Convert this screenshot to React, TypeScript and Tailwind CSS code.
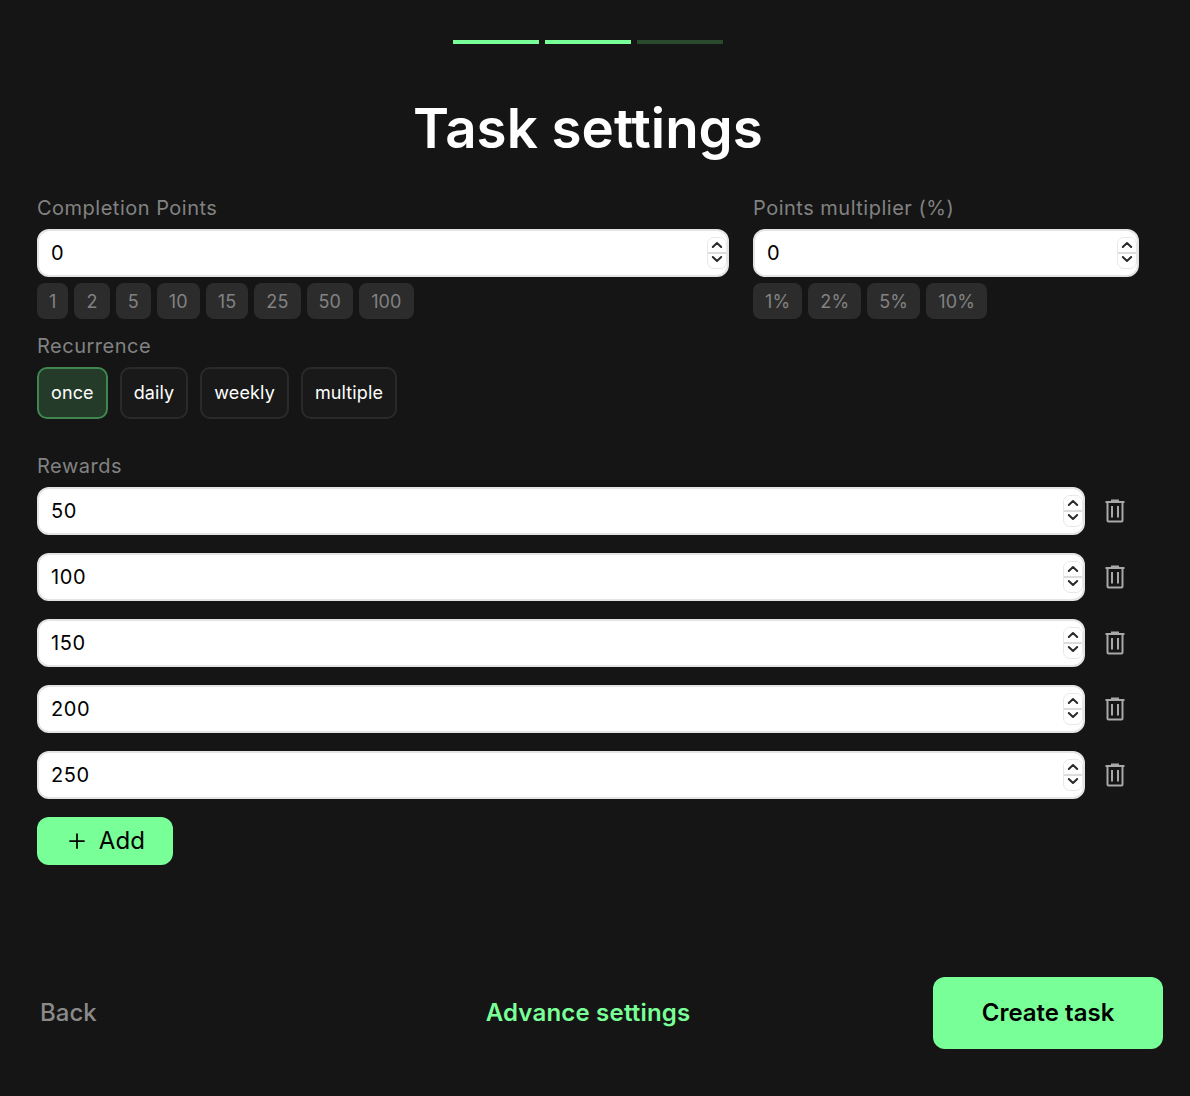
import { Plus } from "lucide-react";

function Spinner() {
  return (
    <div className="flex h-[32px] w-[20px] shrink-0 flex-col overflow-hidden rounded-[7px] border border-[#e8e8e8] bg-white">
      <div className="flex flex-1 items-center justify-center border-b-2 border-[#dcdcdc] bg-white">
        <svg width="12" height="8" viewBox="0 0 12 8" fill="none">
          <path d="M1.8 6 6 2l4.2 4" stroke="#2a2a2a" strokeWidth="2" strokeLinecap="round" strokeLinejoin="round" />
        </svg>
      </div>
      <div className="flex flex-1 items-start justify-center pt-[1px]">
        <svg width="12" height="8" viewBox="0 0 12 8" fill="none">
          <path d="M1.8 2 6 6l4.2-4" stroke="#2a2a2a" strokeWidth="2" strokeLinecap="round" strokeLinejoin="round" />
        </svg>
      </div>
    </div>
  );
}

function NumberField({ value, className }: { value: number; className?: string }) {
  return (
    <div className={`flex h-[48px] items-center rounded-[12px] border-2 border-[#e4e4e4] bg-white pl-[12px] ${className ?? ""}`}>
      <input
        readOnly
        value={value}
        className="w-full min-w-0 flex-1 bg-transparent text-[20px] tracking-[0.6px] text-black outline-none"
      />
      <Spinner />
    </div>
  );
}

function Chip({ label }: { label: string }) {
  return (
    <button className="flex h-[36px] items-center rounded-[8px] bg-[#2c2c2c] px-[12px] text-[18px] tracking-[0.15px] text-[#828282]">
      {label}
    </button>
  );
}

function TrashIcon() {
  return (
    <svg width="20" height="24" viewBox="0 0 20 24" fill="none" stroke="#a8a8a8" strokeWidth="2" className="shrink-0">
      <path d="M0.5 3h19" />
      <path d="M7 3V1.5h6V3" />
      <path d="M2.5 3v18.5a1 1 0 0 0 1 1h13a1 1 0 0 0 1-1V3" />
      <path d="M7 7v11.5M13 7v11.5" />
    </svg>
  );
}

const recurrence = ["once", "daily", "weekly", "multiple"];
const rewards = [50, 100, 150, 200, 250];

export default function App() {
  return (
    <div className="flex min-h-[1096px] w-full flex-col bg-[#151515] font-['Inter',sans-serif]">
      {/* Stepper */}
      <div className="flex justify-center gap-[6px] pr-[14px] pt-[40px]">
        <div className="h-[4px] w-[86px] bg-[#79ff97]" />
        <div className="h-[4px] w-[86px] bg-[#79ff97]" />
        <div className="h-[4px] w-[86px] bg-[#2a4a30]" />
      </div>

      <h1 className="mt-[48px] h-[72px] pr-[14px] text-center text-[54.7px] font-semibold leading-[72px] text-white">
        Task settings
      </h1>

      <div className="mt-[28px] flex flex-col pl-[37px] pr-[51px]">
        <div className="flex gap-[24px]">
          <div className="w-[692px]">
            <div className="mb-[5px] h-[32px] text-[20px] leading-[32px] tracking-[0.5px] text-[#828282]">Completion Points</div>
            <NumberField value={0} />
            <div className="mt-[6px] flex gap-[6px]">
              {["1", "2", "5", "10", "15", "25", "50", "100"].map((c) => (
                <Chip key={c} label={c} />
              ))}
            </div>
          </div>
          <div className="flex-1">
            <div className="mb-[5px] h-[32px] text-[20px] leading-[32px] tracking-[0.5px] text-[#828282]">Points multiplier (%)</div>
            <NumberField value={0} />
            <div className="mt-[6px] flex gap-[6px]">
              {["1%", "2%", "5%", "10%"].map((c) => (
                <Chip key={c} label={c} />
              ))}
            </div>
          </div>
        </div>

        <div className="mb-[5px] mt-[11px] h-[32px] text-[20px] leading-[32px] tracking-[0.5px] text-[#828282]">Recurrence</div>
        <div className="flex gap-[12px]">
          {recurrence.map((r) => (
            <button
              key={r}
              className={
                r === "once"
                  ? "h-[52px] rounded-[10px] border-2 border-[#40864f] bg-[#233b28] px-[12px] pb-[2px] text-[18px] tracking-[0.12px] text-white"
                  : "h-[52px] rounded-[10px] border-2 border-[#2a2a2a] bg-[#191919] px-[12px] pb-[2px] text-[18px] tracking-[0.12px] text-white"
              }
            >
              {r}
            </button>
          ))}
        </div>

        <div className="mb-[5px] mt-[31px] h-[32px] text-[20px] leading-[32px] tracking-[0.5px] text-[#828282]">Rewards</div>
        <div className="mr-[14px] flex flex-col gap-[18px]">
          {rewards.map((v) => (
            <div key={v} className="flex items-center gap-[20px]">
              <NumberField value={v} className="flex-1" />
              <TrashIcon />
            </div>
          ))}
        </div>

        <button className="mt-[18px] flex h-[48px] w-[136px] items-center justify-center gap-[10px] rounded-[12px] bg-[#79ff97] text-[24px] tracking-[0.2px] text-black">
          <Plus size={24} strokeWidth={1.75} />
          Add
        </button>
      </div>

      {/* Footer */}
      <div className="mt-[112px] flex items-center pl-[40px] pr-[27px]">
        <button className="text-[24px] font-medium text-[#8a8a8a]">Back</button>
        <button className="ml-[389px] text-[24px] font-semibold tracking-[0.2px] text-[#79ff97]">Advance settings</button>
        <button className="ml-auto h-[72px] w-[230px] rounded-[12px] bg-[#79ff97] text-[24px] font-semibold text-black">
          Create task
        </button>
      </div>
    </div>
  );
}
